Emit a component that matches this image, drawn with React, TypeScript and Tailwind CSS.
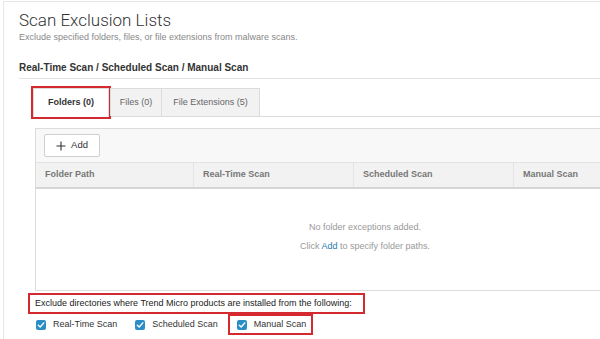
import React from "react";

const Check = () => (
  <span className="inline-flex items-center justify-center w-[10px] h-[10px] rounded-[2px] bg-[#2a8dc5]">
    <svg width="8" height="8" viewBox="0 0 8 8">
      <path d="M1.3 4.2 L3.2 6 L6.8 1.9" fill="none" stroke="#fff" strokeWidth="1.4" strokeLinecap="round" strokeLinejoin="round" />
    </svg>
  </span>
);

export default function App() {
  return (
    <div className="w-[600px] h-[339px] overflow-hidden bg-white font-['Liberation_Sans',Arial,sans-serif]">
      <div className="ml-[3px] mt-[1px] h-[338px] border-l border-t border-[#e6e6e6] pl-[15px] pt-[7px]">
        <div className="font-['Roboto',sans-serif] font-light text-[17px] leading-[22px] text-[#333]">Scan Exclusion Lists</div>
        <div className="text-[9px] leading-[12px] text-[#888] mt-[0px]">Exclude specified folders, files, or file extensions from malware scans.</div>
        <div className="mt-[19px] text-[10px] leading-[12px] font-bold text-[#333]">Real-Time Scan / Scheduled Scan / Manual Scan</div>
        <div className="mt-[4px] border-t border-[#e3e3e3]" />
        <div className="pl-[14px] mt-[10px]">
          <div className="flex items-end h-[28px] border-b border-[#dcdcdc]">
            <div className="w-[76px] flex items-center justify-center bg-white border border-b-0 border-[#dcdcdc] outline outline-2 outline-[#d42a2f] outline-offset-0 text-[9px] font-bold text-[#333] mb-[-1px] h-[29px]">Folders (0)</div>
            <div className="h-[28px] w-[52px] ml-[1px] flex items-center justify-center bg-[#f2f2f2] border border-b-0 border-[#dcdcdc] text-[9px] text-[#666]">Files (0)</div>
            <div className="h-[28px] w-[98px] flex items-center justify-center bg-[#f2f2f2] border border-b-0 border-l-0 border-[#dcdcdc] text-[9px] text-[#666]">File Extensions (5)</div>
          </div>
          <div className="ml-[2px] mt-[11px] w-[660px] h-[163px] border border-[#dcdcdc]">
            <div className="h-[33px] bg-[#f8f8f8] flex items-center pl-[8px]">
              <div className="h-[23px] w-[56px] bg-white border border-[#d0d0d0] rounded-[2px] flex items-center justify-center gap-[5px] text-[9.5px] text-[#333]">
                <svg width="10" height="10" viewBox="0 0 10 10">
                  <path d="M5 0.5 V9.5 M0.5 5 H9.5" stroke="#333" strokeWidth="1.1" />
                </svg>
                <span>Add</span>
              </div>
            </div>
            <div className="h-[27px] bg-[#f2f2f2] border-t border-b-2 border-[#e2e2e2] border-b-[#d6d6d6] flex text-[9px] font-bold text-[#777]">
              <div className="w-[158px] flex items-center pl-[9px] border-r border-[#e4e4e4]">Folder Path</div>
              <div className="w-[160px] flex items-center pl-[9px] border-r border-[#e4e4e4]">Real-Time Scan</div>
              <div className="w-[160px] flex items-center pl-[9px] border-r border-[#e4e4e4]">Scheduled Scan</div>
              <div className="w-[160px] flex items-center pl-[9px]">Manual Scan</div>
            </div>
            <div className="flex flex-col items-center pt-[32px] text-[9px] text-[#999]">
              <div className="leading-[12px]">No folder exceptions added.</div>
              <div className="leading-[12px] mt-[7px]">Click <span className="text-[#1f7bb0]">Add</span> to specify folder paths.</div>
            </div>
          </div>
        </div>
        <div className="mt-[2px] ml-[9px] w-[337px] h-[21px] border-2 border-[#d42a2f] flex items-center pl-[5px] text-[9px] text-[#222] whitespace-nowrap">
          Exclude directories where Trend Micro products are installed from the following:
        </div>
        <div className="flex items-center ml-[17px] mt-[0px] h-[21px] text-[9px] text-[#333]">
          <div className="flex items-center gap-[7px]"><Check /><span>Real-Time Scan</span></div>
          <div className="flex items-center gap-[7px] ml-[18px]"><Check /><span>Scheduled Scan</span></div>
          <div className="flex items-center gap-[7px] ml-[10px] h-[21px] border-2 border-[#d42a2f] pl-[7px] pr-[5px]"><Check /><span>Manual Scan</span></div>
        </div>
      </div>
    </div>
  );
}
